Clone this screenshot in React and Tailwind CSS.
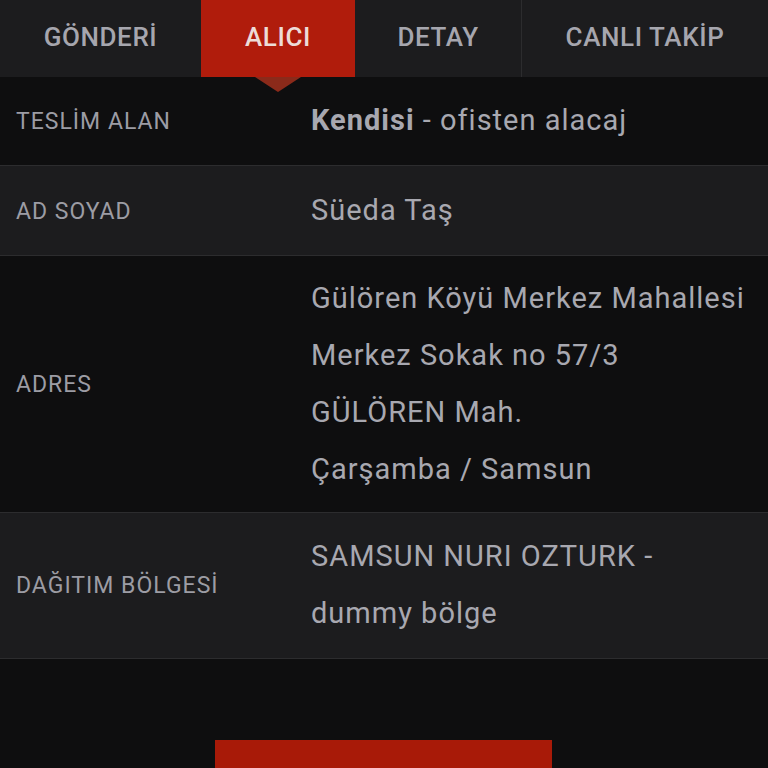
const tabs = [
  { label: "GÖNDERİ", w: "w-[201px]" },
  { label: "ALICI", w: "w-[154px]", active: true },
  { label: "DETAY", w: "w-[167px]" },
  { label: "CANLI TAKİP", w: "flex-1" },
];

const rows = [
  { label: "TESLİM ALAN", lines: [<><b className="font-bold">Kendisi</b> - ofisten alacaj</>], dark: true, pad: "pt-[15px] pb-[16px]" },
  { label: "AD SOYAD", lines: ["Süeda Taş"], pad: "py-[16px]" },
  {
    label: "ADRES",
    lines: ["Gülören Köyü Merkez Mahallesi", "Merkez Sokak no 57/3", "GÜLÖREN Mah.", "Çarşamba / Samsun"],
    dark: true,
    pad: "py-[14px]",
  },
  { label: "DAĞITIM BÖLGESİ", lines: ["SAMSUN NURI OZTURK -", "dummy bölge"], pad: "pt-[15px] pb-[16px]" },
];

export default function App() {
  return (
    <div className="w-[768px] h-[768px] overflow-hidden bg-[#0e0e0f] flex flex-col" style={{ fontFamily: "Roboto, 'Noto Sans', sans-serif" }}>
      <div className="relative flex h-[77px] bg-[#1c1c1e] shrink-0">
        {tabs.map((t, i) => (
          <div
            key={t.label}
            className={`${t.w} relative flex items-center justify-center pb-[2px] text-[26px] tracking-[0.6px] font-medium ${
              t.active ? "bg-[#b01c0c] text-[#eddcd8]" : "text-[#a6a6ae]"
            } ${i === 2 ? "border-r border-[#2c2c2e]" : ""}`}
          >
            {t.label}
            {t.active && (
              <div className="absolute left-[54px] top-[77px] w-0 h-0 border-l-[23px] border-r-[23px] border-t-[15px] border-l-transparent border-r-transparent border-t-[#8b2a1a] z-10" />
            )}
          </div>
        ))}
      </div>

      {rows.map((r) => (
        <div
          key={r.label}
          className={`flex items-center border-b border-[#2c2c2e] ${r.pad} ${r.dark ? "bg-[#0e0e0f]" : "bg-[#1c1c1e]"}`}
        >
          <div className="w-[311px] pl-4 pt-[3px] text-[23px] tracking-[1px] text-[#9c9ca4] shrink-0">{r.label}</div>
          <div className="text-[29px] tracking-[1px] leading-[57px] text-[#a8a8b0] whitespace-nowrap">
            {r.lines.map((l, i) => (
              <div key={i}>{l}</div>
            ))}
          </div>
        </div>
      ))}

      <div className="flex-1 flex items-end justify-center">
        <button className="w-[337px] h-[28px] bg-[#a81a08] ml-[-1px]" />
      </div>
    </div>
  );
}
